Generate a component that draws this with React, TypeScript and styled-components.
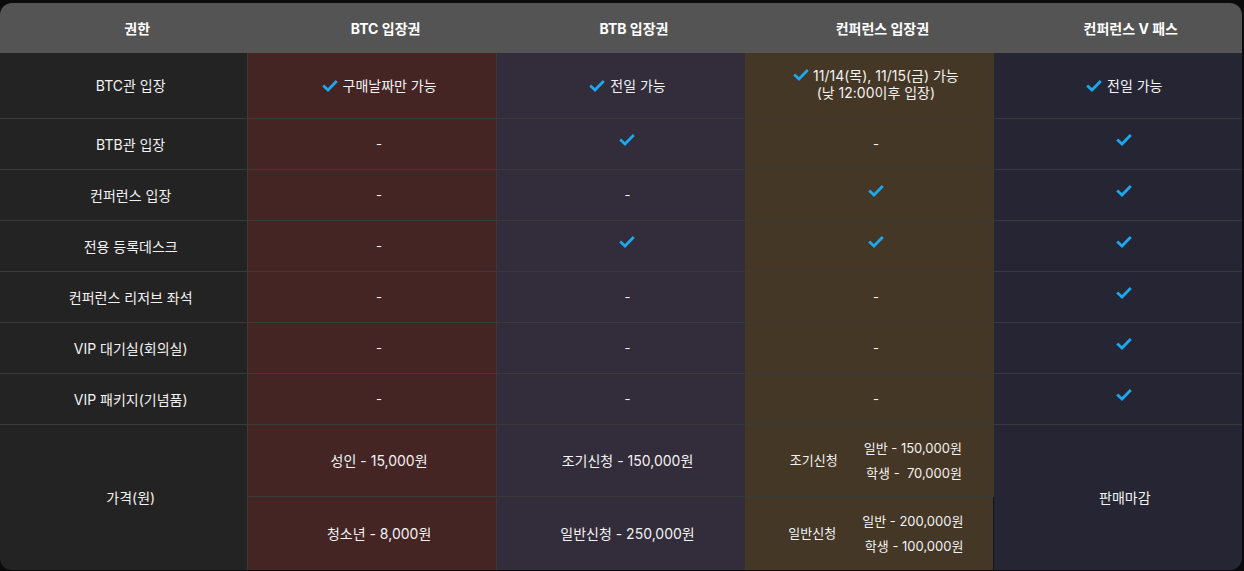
import styled, { createGlobalStyle } from 'styled-components';

const GlobalStyle = createGlobalStyle`
  html, body {
    margin: 0;
    padding: 0;
    background: #0b0b0b;
  }
  body {
    font-family: Inter, "Noto Sans CJK KR", "Noto Sans", sans-serif;
    color: #f2f2f2;
  }
`;

type Tone = 'label' | 'btc' | 'btb' | 'conf' | 'vpass';

const tones: Record<Tone, string> = {
  label: '#232323',
  btc: '#452524',
  btb: '#332c3a',
  conf: '#453726',
  vpass: '#262534',
};

const columns: { title: string; tone: Tone }[] = [
  { title: '권한', tone: 'label' },
  { title: 'BTC 입장권', tone: 'btc' },
  { title: 'BTB 입장권', tone: 'btb' },
  { title: '컨퍼런스 입장권', tone: 'conf' },
  { title: '컨퍼런스 V 패스', tone: 'vpass' },
];

// 'check' = check mark only, '-' = not included, anything else = check + text
const rows: { name: string; values: string[] }[] = [
  { name: 'BTC관 입장', values: ['구매날짜만 가능', '전일 가능', 'conf-days', '전일 가능'] },
  { name: 'BTB관 입장', values: ['-', 'check', '-', 'check'] },
  { name: '컨퍼런스 입장', values: ['-', '-', 'check', 'check'] },
  { name: '전용 등록데스크', values: ['-', 'check', 'check', 'check'] },
  { name: '컨퍼런스 리저브 좌석', values: ['-', '-', '-', 'check'] },
  { name: 'VIP 대기실(회의실)', values: ['-', '-', '-', 'check'] },
  { name: 'VIP 패키지(기념품)', values: ['-', '-', '-', 'check'] },
];

const Check = () => (
  <CheckIcon viewBox="0 0 16 16" aria-hidden>
    <path d="M2.2 8.4 L6 12 L13.8 4" />
  </CheckIcon>
);

const renderValue = (v: string) => {
  if (v === '-') return <Dash>-</Dash>;
  if (v === 'check')
    return (
      <SoloCheck>
        <Check />
      </SoloCheck>
    );
  if (v === 'conf-days')
    return (
      <TwoLine>
        <span>
          <Check /> 11/14(목), 11/15(금) 가능
        </span>
        <span>(낮 12:00이후 입장)</span>
      </TwoLine>
    );
  return (
    <Inline>
      <Check />
      {v}
    </Inline>
  );
};

export default function App() {
  return (
    <>
      <GlobalStyle />
      <Page>
        <Table>
          {columns.map((c) => (
            <HeadCell key={c.title}>{c.title}</HeadCell>
          ))}

          {rows.map((r) => (
            <Row key={r.name}>
              <Cell $tone="label">{r.name}</Cell>
              {r.values.map((v, j) => (
                <Cell key={j} $tone={columns[j + 1].tone}>
                  {renderValue(v)}
                </Cell>
              ))}
            </Row>
          ))}

          <PriceLabel $tone="label">가격(원)</PriceLabel>
          <PriceCell $tone="btc">성인 - 15,000원</PriceCell>
          <PriceCell $tone="btb">조기신청 - 150,000원</PriceCell>
          <PriceCell $tone="conf">
            <PriceGroup>
              <span>조기신청</span>
              <PriceList>
                <span>일반 - 150,000원</span>
                <span>학생 -&nbsp; 70,000원</span>
              </PriceList>
            </PriceGroup>
          </PriceCell>
          <SoldOut $tone="vpass">판매마감</SoldOut>

          <PriceCell $tone="btc" $last>청소년 - 8,000원</PriceCell>
          <PriceCell $tone="btb" $last>일반신청 - 250,000원</PriceCell>
          <PriceCell $tone="conf" $last $edge>
            <PriceGroup>
              <span>일반신청</span>
              <PriceList>
                <span>일반 - 200,000원</span>
                <span>학생 - 100,000원</span>
              </PriceList>
            </PriceGroup>
          </PriceCell>
        </Table>
      </Page>
    </>
  );
}

const Page = styled.div`
  padding: 3px 2px 1px 0;
  width: 1244px;
  height: 571px;
  box-sizing: border-box;
`;

const Table = styled.div`
  display: grid;
  grid-template-columns: repeat(5, 1fr);
  grid-template-rows: 50px 66px repeat(6, 51px) 72px 73px;
  border-radius: 12px;
  overflow: hidden;
  font-size: 14px;
  line-height: 17px;
`;

const HeadCell = styled.div`
  background: #545454;
  color: #ffffff;
  font-weight: 700;
  display: flex;
  align-items: center;
  justify-content: center;
  padding-left: 26px;
`;

const Row = styled.div`
  display: contents;
`;

const Cell = styled.div<{ $tone: Tone }>`
  background: ${(p) => tones[p.$tone]};
  border-bottom: 1px solid #3a3a3a;
  border-right: 1px solid ${(p) => (p.$tone === 'label' || p.$tone === 'btc' ? '#3a3a3a' : 'transparent')};
  display: flex;
  align-items: center;
  justify-content: center;
  text-align: center;
  padding-left: 14px;
  box-sizing: border-box;
`;

const PriceLabel = styled(Cell)`
  grid-row: span 2;
  border-bottom: none;
`;

const SoldOut = styled(Cell)`
  grid-row: span 2;
  border-bottom: none;
  border-right: none;
`;

const PriceCell = styled(Cell)<{ $last?: boolean; $edge?: boolean }>`
  border-bottom: ${(p) => (p.$last ? 'none' : '1px solid #3a3a3a')};
  border-right-color: ${(p) => (p.$edge ? '#151515' : p.$tone === 'btc' ? '#3a3a3a' : 'transparent')};
`;

const CheckIcon = styled.svg`
  width: 16px;
  height: 16px;
  fill: none;
  stroke: #1aa8ef;
  stroke-width: 2.8;
  stroke-linecap: square;
  vertical-align: -2px;
  flex-shrink: 0;
`;

const SoloCheck = styled.span`
  display: inline-flex;
  margin-bottom: 8px;
`;

const Inline = styled.span`
  display: inline-flex;
  align-items: center;
  gap: 5px;
`;

const TwoLine = styled.div`
  display: flex;
  flex-direction: column;
  align-items: center;
  margin-top: -4px;
`;

const Dash = styled.span`
  font-size: 13px;
`;

const PriceGroup = styled.div`
  display: flex;
  align-items: center;
  gap: 26px;
  font-size: 13px;
`;

const PriceList = styled.div`
  display: flex;
  flex-direction: column;
  align-items: flex-end;
  gap: 8px;
  white-space: pre;
`;
